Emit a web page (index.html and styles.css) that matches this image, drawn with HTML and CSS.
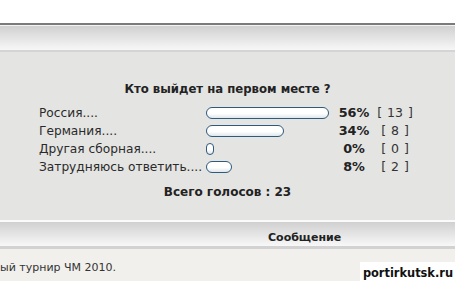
FILE: index.html
```html
<!DOCTYPE html>
<html>
<head>
<meta charset="utf-8">
<link rel="stylesheet" href="styles.css">
</head>
<body>
<div class="page">
  <div class="topspace"></div>
  <div class="cathead"></div>
  <div class="poll">
    <div class="poll-title">Кто выйдет на первом месте ?</div>
    <div class="poll-rows">
      <div class="label">Россия....</div>
      <div class="barcell"><div class="bar" style="width:123px"></div></div>
      <div class="pct">56%</div>
      <div class="cnt">[ 13 ]</div>

      <div class="label">Германия....</div>
      <div class="barcell"><div class="bar" style="width:78px"></div></div>
      <div class="pct">34%</div>
      <div class="cnt">[ 8 ]</div>

      <div class="label">Другая сборная....</div>
      <div class="barcell"><div class="bar" style="width:8px"></div></div>
      <div class="pct">0%</div>
      <div class="cnt">[ 0 ]</div>

      <div class="label">Затрудняюсь ответить....</div>
      <div class="barcell"><div class="bar" style="width:26px"></div></div>
      <div class="pct">8%</div>
      <div class="cnt">[ 2 ]</div>
    </div>
    <div class="poll-total">Всего голосов : 23</div>
  </div>
  <div class="msghead"><span class="msgtitle">Сообщение</span></div>
  <div class="post">ый турнир ЧМ 2010.</div>
  <div class="watermark">portirkutsk.ru</div>
</div>
</body>
</html>
```
FILE: styles.css
```css
html, body {
  margin: 0;
  padding: 0;
  background: #ffffff;
}
.page {
  width: 455px;
  height: 281px;
  overflow: hidden;
  position: relative;
  font-family: "DejaVu Sans", Verdana, sans-serif;
  font-size: 11px;
  color: #222;
}
.topspace {
  height: 23px;
  background: #ffffff;
}
.cathead {
  height: 25px;
  border-top: 2px solid #7b7b7b;
  border-bottom: 2px solid #d4d4d4;
  box-shadow: inset 0 1px 0 #f4f4f4, inset 0 -1px 0 #f6f6f6;
  background: linear-gradient(#cfcfcf, #f7f7f7);
}
.poll {
  background: #e4e4e2;
  height: 138px;
  padding-top: 30px;
  display: flex;
  flex-direction: column;
}
.poll-title {
  font-weight: bold;
  font-size: 11.7px;
  text-align: center;
  line-height: 14px;
  height: 14px;
}
.poll-rows {
  margin-top: 8px;
  padding-left: 39px;
  display: grid;
  grid-template-columns: 167px 127px 42px 40px;
  grid-auto-rows: 18px;
  align-items: center;
  line-height: 14px;
}
.label {
  color: #2a2a2a;
  font-size: 12.2px;
  white-space: nowrap;
}
.barcell {
  display: flex;
  align-items: center;
}
.bar {
  box-sizing: border-box;
  height: 12px;
  border: 1px solid #2f5a7c;
  border-radius: 6px;
  background: linear-gradient(#ffffff 0%, #ffffff 55%, #dfe6ec 100%);
}
.pct {
  font-weight: bold;
  font-size: 12.8px;
  text-align: center;
  color: #222;
}
.cnt {
  text-align: center;
  font-size: 12.5px;
  word-spacing: 1px;
  color: #333;
}
.poll-total {
  margin-top: 9px;
  font-weight: bold;
  font-size: 12px;
  text-align: center;
  line-height: 14px;
}
.msghead {
  height: 24px;
  border-top: 2px solid #fafafa;
  border-bottom: 3px solid #d2d2d2;
  background: linear-gradient(#d0d0d0, #f8f8f8);
  display: flex;
  align-items: flex-start;
}
.msgtitle {
  font-weight: bold;
  margin-left: 268px;
  line-height: 14px;
  padding-top: 9px;
}
.post {
  background: #f1f0ec;
  height: 40px;
  padding-top: 12px;
  line-height: 14px;
  color: #333;
  font-size: 11px;
}
.watermark {
  position: absolute;
  right: 0;
  bottom: 0;
  background: #ffffff;
  color: #111;
  font-weight: bold;
  font-size: 11.4px;
  line-height: 14px;
  padding: 4px 2px 1px 3px;
}
```
